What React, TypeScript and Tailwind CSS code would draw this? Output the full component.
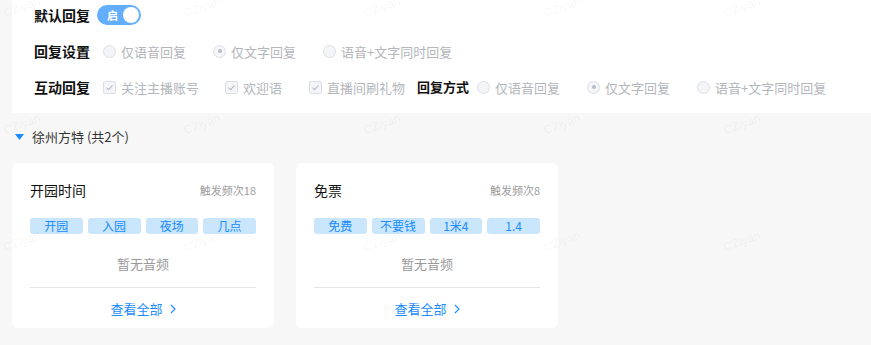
import React from "react";

const FONT = { fontFamily: '"Noto Sans CJK SC", "Noto Sans", sans-serif' };

function Radio({ checked }: { checked?: boolean }) {
  return (
    <span className="w-[13px] h-[13px] rounded-full border border-[#dcdfe6] bg-[#f3f5f8] flex items-center justify-center shrink-0">
      {checked && <span className="w-[4px] h-[4px] rounded-full bg-[#b8bcc4]" />}
    </span>
  );
}

function Check() {
  return (
    <span className="w-[13px] h-[13px] rounded-[2px] border border-[#dcdfe6] bg-[#f3f5f8] flex items-center justify-center shrink-0">
      <svg width="9" height="9" viewBox="0 0 9 9">
        <path d="M1.5 4.6 L3.6 6.6 L7.5 2.4" fill="none" stroke="#b8bcc4" strokeWidth="1.1" />
      </svg>
    </span>
  );
}

function Opt({ kind, checked, text, ml }: { kind: "r" | "c"; checked?: boolean; text: string; ml: string }) {
  return (
    <div className={`flex items-center ${ml}`}>
      {kind === "r" ? <Radio checked={checked} /> : <Check />}
      <span className="ml-[5px] text-[13px] text-[#b3b6bc] leading-none whitespace-nowrap">{text}</span>
    </div>
  );
}

function Card({ title, count, tags }: { title: string; count: number; tags: string[] }) {
  return (
    <div className="w-[262px] h-[165px] rounded-[6px] bg-white px-[18px] flex flex-col">
      <div className="mt-[17px] h-[20px] flex items-center justify-between">
        <span className="text-[14px] text-[#111]">{title}</span>
        <span className="text-[11px] text-[#9b9b9b]">触发频次{count}</span>
      </div>
      <div className="mt-[18px] h-[16px] flex gap-[5px]">
        {tags.map((t) => (
          <div key={t} className="flex-1 rounded-[3px] bg-[#c9e6fd] text-[#1a8cff] text-[12px] leading-[16px] text-center">
            {t}
          </div>
        ))}
      </div>
      <div className="mt-[20px] h-[20px] flex items-center justify-center text-[13px] text-[#9a9a9a]">暂无音频</div>
      <div className="mt-[13px] h-px bg-[#e3e4e8]" />
      <div className="mt-[11px] h-[20px] flex items-center justify-center text-[13px] text-[#1a8cff]">
        <span>查看全部</span>
        <svg className="ml-[7px]" width="6" height="10" viewBox="0 0 6 10">
          <path d="M1 1 L5 5 L1 9" fill="none" stroke="#1a8cff" strokeWidth="1.1" />
        </svg>
      </div>
    </div>
  );
}

export default function App() {
  const marks: { x: number; y: number }[] = [];
  for (let r = 0; r < 4; r++) for (let c = 0; c < 5; c++) marks.push({ x: 3 + c * 180, y: r * 117 - 2 });
  return (
    <div className="relative w-[871px] h-[345px] overflow-hidden bg-[#f7f7f7] pl-[12px]" style={FONT}>
      <div className="bg-white h-[113px] pl-[22px] pt-[5px]">
        <div className="h-[20px] flex items-center">
          <span className="text-[14px] font-bold text-[#111]">默认回复</span>
          <div className="ml-[7px] w-[44px] h-[20px] rounded-full bg-[#62aefc] flex items-center justify-between pl-[10px] pr-[2px]">
            <span className="text-[11px] font-bold text-white leading-none">启</span>
            <span className="w-[16px] h-[16px] rounded-full bg-white" />
          </div>
        </div>
        <div className="mt-[16px] h-[20px] flex items-center">
          <span className="text-[14px] font-bold text-[#111]">回复设置</span>
          <Opt kind="r" text="仅语音回复" ml="ml-[13px]" />
          <Opt kind="r" checked text="仅文字回复" ml="ml-[27px]" />
          <Opt kind="r" text="语音+文字同时回复" ml="ml-[27px]" />
        </div>
        <div className="mt-[16px] h-[20px] flex items-center">
          <span className="text-[14px] font-bold text-[#111]">互动回复</span>
          <Opt kind="c" text="关注主播账号" ml="ml-[13px]" />
          <Opt kind="c" text="欢迎语" ml="ml-[26px]" />
          <Opt kind="c" text="直播间刷礼物" ml="ml-[27px]" />
          <span className="ml-[12px] text-[13px] font-bold text-[#111]">回复方式</span>
          <Opt kind="r" text="仅语音回复" ml="ml-[8px]" />
          <Opt kind="r" checked text="仅文字回复" ml="ml-[27px]" />
          <Opt kind="r" text="语音+文字同时回复" ml="ml-[27px]" />
        </div>
      </div>
      <div className="mt-[14px] h-[20px] flex items-center pl-[3px]">
        <svg width="9" height="6" viewBox="0 0 9 6">
          <path d="M0 0 L9 0 L4.5 6 Z" fill="#1a8cff" />
        </svg>
        <span className="ml-[8px] text-[13px] text-[#333]">徐州方特 (共2个)</span>
      </div>
      <div className="mt-[16px] flex gap-[22px]">
        <Card title="开园时间" count={18} tags={["开园", "入园", "夜场", "几点"]} />
        <Card title="免票" count={8} tags={["免费", "不要钱", "1米4", "1.4"]} />
      </div>
      <div className="pointer-events-none absolute inset-0">
        {marks.map((m, i) => (
          <span
            key={i}
            className="absolute text-[12px] text-black/[0.05] -rotate-[20deg] whitespace-nowrap"
            style={{ left: m.x, top: m.y, fontFamily: '"Liberation Sans", sans-serif' }}
          >
            CZiyan
          </span>
        ))}
      </div>
    </div>
  );
}
